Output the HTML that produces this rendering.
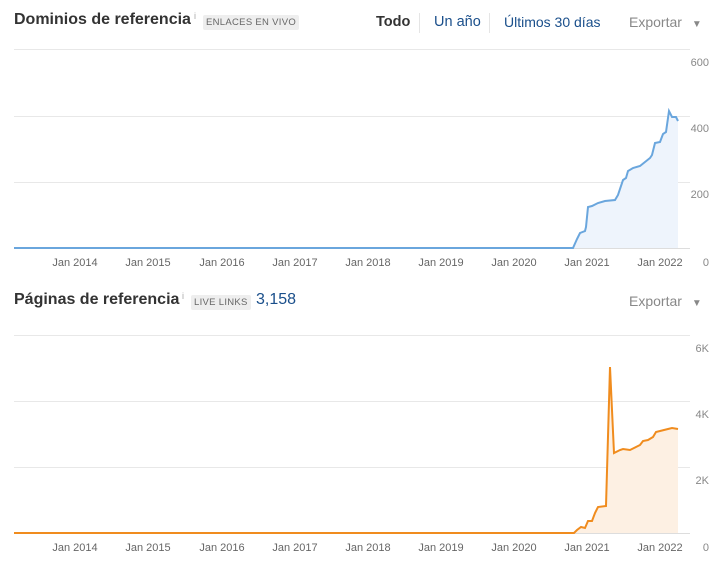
<!DOCTYPE html>
<html><head><meta charset="utf-8"><style>
body{margin:0;background:#fff;font-family:"Liberation Sans",Arial,sans-serif;width:719px;height:571px;overflow:hidden;position:relative}
.t{position:absolute;white-space:nowrap}
.h{font-size:16px;font-weight:bold;color:#333}
.badge{font-size:9.5px;color:#666;background:#eee;padding:2px 3px;border-radius:2px;letter-spacing:.3px}
.i{font-size:9px;color:#aaa}
</style></head><body>
<div class="t h" style="left:14px;top:11px">Dominios de referencia</div>
<div class="t i" style="left:194px;top:11px">i</div>
<div class="t badge" style="left:203px;top:15px">ENLACES EN VIVO</div>
<div class="t" style="left:376px;top:14px;font-size:14.5px;font-weight:bold;color:#333">Todo</div>
<div class="t" style="left:419px;top:13px;width:1px;height:20px;background:#e5e5e5"></div>
<div class="t" style="left:434px;top:14px;font-size:14.5px;color:#1a4f8b">Un año</div>
<div class="t" style="left:489px;top:13px;width:1px;height:20px;background:#e5e5e5"></div>
<div class="t" style="left:504px;top:14px;font-size:14px;color:#1a4f8b">Últimos 30 días</div>
<div class="t" style="left:629px;top:14px;font-size:14px;color:#888">Exportar <span style="font-size:10px;margin-left:6px">▼</span></div>

<div class="t h" style="left:14px;top:291px">Páginas de referencia</div>
<div class="t i" style="left:182px;top:291px">i</div>
<div class="t badge" style="left:191px;top:295px">LIVE LINKS</div>
<div class="t" style="left:256px;top:291px;font-size:16px;color:#1a4f8b">3,158</div>
<div class="t" style="left:629px;top:293px;font-size:14px;color:#888">Exportar <span style="font-size:10px;margin-left:6px">▼</span></div>

<svg width="719" height="571" style="position:absolute;left:0;top:0" font-family="Liberation Sans,Arial,sans-serif" font-size="11" fill="#666">
<g stroke="#e8e8e8" stroke-width="1">
<line x1="14" y1="49.5" x2="690" y2="49.5"/><line x1="14" y1="116.5" x2="690" y2="116.5"/><line x1="14" y1="182.5" x2="690" y2="182.5"/>
<line x1="14" y1="335.5" x2="690" y2="335.5"/><line x1="14" y1="401.5" x2="690" y2="401.5"/><line x1="14" y1="467.5" x2="690" y2="467.5"/>
</g>
<g stroke="#ddd"><line x1="14" y1="248.5" x2="690" y2="248.5"/><line x1="14" y1="533.5" x2="690" y2="533.5"/></g>
<g text-anchor="end" fill="#888">
<text x="709" y="66">600</text><text x="709" y="132">400</text><text x="709" y="198">200</text><text x="709" y="266">0</text>
<text x="709" y="352">6K</text><text x="709" y="418">4K</text><text x="709" y="484">2K</text><text x="709" y="551">0</text>
</g>
<g text-anchor="middle">
<text x="75" y="266">Jan 2014</text><text x="148" y="266">Jan 2015</text><text x="222" y="266">Jan 2016</text><text x="295" y="266">Jan 2017</text><text x="368" y="266">Jan 2018</text><text x="441" y="266">Jan 2019</text><text x="514" y="266">Jan 2020</text><text x="587" y="266">Jan 2021</text><text x="660" y="266">Jan 2022</text>
<text x="75" y="551">Jan 2014</text><text x="148" y="551">Jan 2015</text><text x="222" y="551">Jan 2016</text><text x="295" y="551">Jan 2017</text><text x="368" y="551">Jan 2018</text><text x="441" y="551">Jan 2019</text><text x="514" y="551">Jan 2020</text><text x="587" y="551">Jan 2021</text><text x="660" y="551">Jan 2022</text>
</g>
<path d="M14 248 L573 248 L577 239 L580 233 L585 231 L586 227 L588 207 L592 206 L598 203 L605 201 L615 200 L618 195 L623 180 L626 178 L628 171 L633 168 L640 166 L645 162 L650 158 L652 155 L655 143 L660 142 L663 134 L666 132 L669 111 L672 117 L676 117 L678 121 L678 248 Z" fill="#eef4fc"/>
<path d="M14 248 L573 248 L577 239 L580 233 L585 231 L586 227 L588 207 L592 206 L598 203 L605 201 L615 200 L618 195 L623 180 L626 178 L628 171 L633 168 L640 166 L645 162 L650 158 L652 155 L655 143 L660 142 L663 134 L666 132 L669 111 L672 117 L676 117 L678 121" fill="none" stroke="#6aa6dd" stroke-width="2"/>
<path d="M14 533 L574 533 L577 530 L581 527 L585 528 L588 521 L592 521 L595 513 L598 507 L606 506 L610 367 L614 453 L620 450 L623 449 L630 450 L636 447 L640 445 L643 441 L648 440 L653 437 L656 432 L664 430 L668 429 L672 428 L678 429 L678 533 Z" fill="#fdf0e3"/>
<path d="M14 533 L574 533 L577 530 L581 527 L585 528 L588 521 L592 521 L595 513 L598 507 L606 506 L610 367 L614 453 L620 450 L623 449 L630 450 L636 447 L640 445 L643 441 L648 440 L653 437 L656 432 L664 430 L668 429 L672 428 L678 429" fill="none" stroke="#f08c1e" stroke-width="2"/>
</svg>
</body></html>
